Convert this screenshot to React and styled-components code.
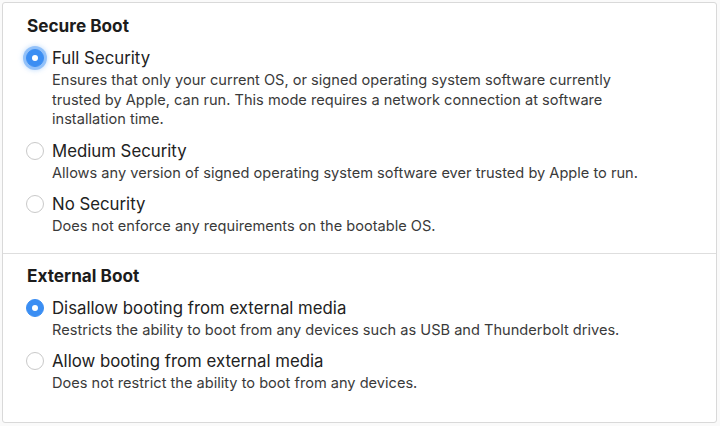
import React from 'react'
import styled, { createGlobalStyle } from 'styled-components'

const GlobalStyle = createGlobalStyle`
  html, body {
    margin: 0;
    padding: 0;
    background: #fafafa;
  }
  body {
    font-family: Inter, "Liberation Sans", sans-serif;
    -webkit-font-smoothing: antialiased;
  }
`;

const Frame = styled.div`
  margin: 2px 3px 3px 2px;
  height: 421px;
  box-sizing: border-box;
  background: #fff;
  border: 1px solid #d9d9d9;
  border-radius: 3px;
  display: flex;
  flex-direction: column;
`;

const Section = styled.section`
  display: flex;
  flex-direction: column;
  padding: ${p => p.$top}px 20px ${p => p.$bottom}px 24px;
  border-bottom: ${p => (p.$divided ? '1px solid #dedede' : 'none')};
  flex: ${p => (p.$grow ? 1 : 'none')};
`;

const Heading = styled.h2`
  margin: 0 0 12px;
  font-size: 17.2px;
  line-height: 20px;
  font-weight: 700;
  color: #1c1c1c;
`;

const Options = styled.div`
  display: flex;
  flex-direction: column;
  gap: 11px;
`;

const Option = styled.div`
  display: grid;
  grid-template-columns: 18px 1fr;
  column-gap: 8px;
  margin-left: -1px;
`;

const Radio = styled.span`
  width: 18px;
  height: 18px;
  box-sizing: border-box;
  border-radius: 50%;
  align-self: center;
  display: flex;
  align-items: center;
  justify-content: center;
  background: ${p => (p.$checked ? '#3b8ef3' : '#fff')};
  border: 1px solid ${p => (p.$checked ? '#3b8ef3' : '#c9c9c9')};
  box-shadow: ${p => (p.$focused ? '0 0 0 3px rgba(90, 160, 245, 0.55), 0 0 4px 4px rgba(120, 180, 250, 0.35)' : 'none')};

  &::after {
    content: '';
    display: ${p => (p.$checked ? 'block' : 'none')};
    width: 6px;
    height: 6px;
    border-radius: 50%;
    background: #fff;
  }
`;

const Title = styled.div`
  font-size: 16.8px;
  line-height: 20px;
  color: #222;
`;

const Desc = styled.div`
  grid-column: 2;
  margin-top: 3px;
  font-size: 14.6px;
  line-height: 19.5px;
  color: #3a3a3a;
  white-space: nowrap;
`;

const secure = [
  {
    title: 'Full Security',
    desc: ['Ensures that only your current OS, or signed operating system software currently', 'trusted by Apple, can run. This mode requires a network connection at software', 'installation time.'],
    checked: true,
    focused: true,
  },
  {
    title: 'Medium Security',
    desc: ['Allows any version of signed operating system software ever trusted by Apple to run.'],
  },
  {
    title: 'No Security',
    desc: ['Does not enforce any requirements on the bootable OS.'],
  },
]

const external = [
  {
    title: 'Disallow booting from external media',
    desc: ['Restricts the ability to boot from any devices such as USB and Thunderbolt drives.'],
    checked: true,
  },
  {
    title: 'Allow booting from external media',
    desc: ['Does not restrict the ability to boot from any devices.'],
  },
]

function OptionList({ items }) {
  return (
    <Options>
      {items.map(item => (
        <Option key={item.title}>
          <Radio $checked={item.checked} $focused={item.focused} />
          <Title>{item.title}</Title>
          <Desc>
            {item.desc.map((line, i) => (
              <div key={i}>{line}</div>
            ))}
          </Desc>
        </Option>
      ))}
    </Options>
  )
}

export default function App() {
  return (
    <>
      <GlobalStyle />
      <Frame>
        <Section $top={13} $bottom={16} $divided>
          <Heading>Secure Boot</Heading>
          <OptionList items={secure} />
        </Section>
        <Section $top={12} $bottom={20} $grow>
          <Heading>External Boot</Heading>
          <OptionList items={external} />
        </Section>
      </Frame>
    </>
  )
}
